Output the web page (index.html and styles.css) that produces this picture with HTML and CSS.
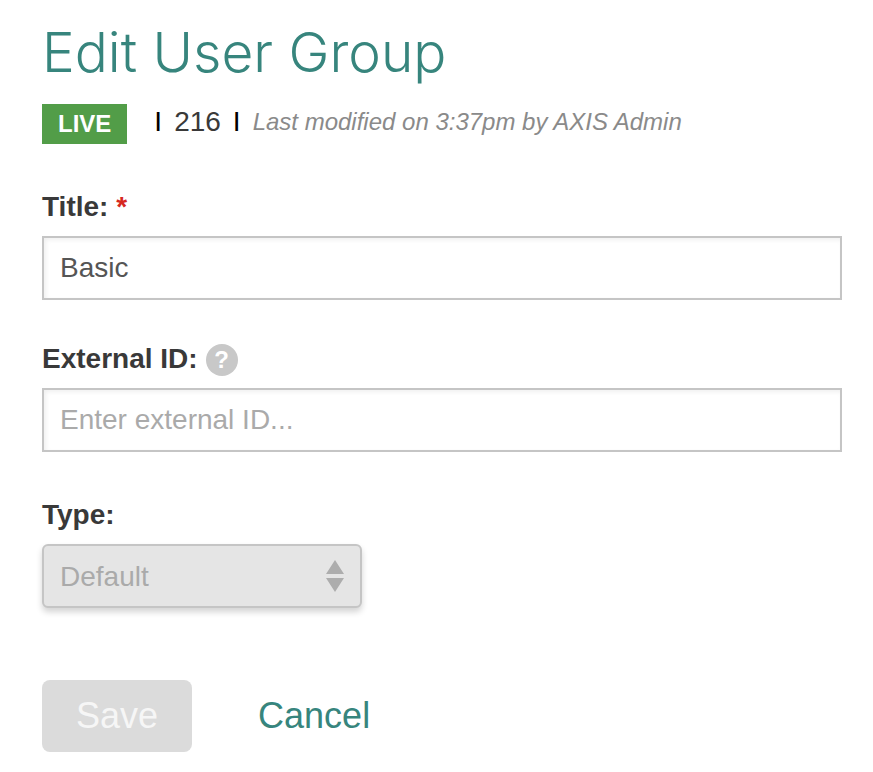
FILE: index.html
```html
<!DOCTYPE html>
<html lang="en">
<head>
<meta charset="utf-8">
<title>Edit User Group</title>
<link rel="stylesheet" href="styles.css">
</head>
<body>
<main class="page">
  <h1 class="title">Edit User Group</h1>
  <div class="meta">
    <span class="badge">LIVE</span>
    <span class="divider">I</span>
    <span class="id">216</span>
    <span class="divider">I</span>
    <em class="modified">Last modified on 3:37pm by AXIS Admin</em>
  </div>
  <form class="form">
    <div class="field">
      <div class="label-row">
        <label for="title">Title: <span class="required">*</span></label>
      </div>
      <input class="control" id="title" type="text" value="Basic">
    </div>
    <div class="field">
      <div class="label-row">
        <label for="external">External ID:</label>
        <button class="help" type="button">?</button>
      </div>
      <input class="control" id="external" type="text" placeholder="Enter external ID...">
    </div>
    <div class="field field-type">
      <div class="label-row">
        <label for="type">Type:</label>
      </div>
      <div class="select-wrap">
        <select class="control select" id="type" disabled><option>Default</option></select>
        <svg class="arrows" viewBox="0 0 18 32" width="18" height="32" aria-hidden="true"><path d="M9 0L18 14H0zM0 18H18L9 32z" fill="#adadad"/></svg>
      </div>
    </div>
    <div class="actions">
      <button class="save" type="submit" disabled>Save</button>
      <a class="cancel" href="#">Cancel</a>
    </div>
  </form>
</main>
</body>
</html>
```
FILE: styles.css
```css
* { box-sizing: border-box; }

body {
  margin: 0;
  background: #fff;
  color: #393939;
  font-family: "Liberation Sans", Arial, sans-serif;
  font-size: 28px;
  line-height: 32px;
}

.page { padding: 20px 31px 20px 42px; }

.title {
  margin: 0;
  color: #37857d;
  font-family: Inter, sans-serif;
  font-size: 55px;
  font-weight: 300;
  line-height: 64px;
}

.meta {
  display: flex;
  align-items: center;
  margin-top: 20px;
}

.badge {
  padding: 0 16px;
  background: #529d48;
  color: #fff;
  font-size: 24px;
  font-weight: bold;
  line-height: 40px;
  margin-right: 27px;
}

.divider { color: #000; padding-bottom: 4px; }

.id { margin: 0 12px; padding-bottom: 4px; }

.modified {
  margin-left: 12px;
  padding-bottom: 4px;
  color: #8a8a8a;
  font-size: 24px;
}

.field { margin-bottom: 44px; }

.field-type { padding-top: 4px; }

.form { padding-top: 48px; }

.label-row {
  display: flex;
  align-items: center;
  gap: 8px;
  height: 32px;
  margin-bottom: 12px;
  font-weight: bold;
}

.label-row label { padding-bottom: 2px; }

.required { color: #d6281f; }

.help {
  width: 32px;
  height: 32px;
  padding: 0;
  border: 0;
  border-radius: 50%;
  background: #c8c8c8;
  color: #fff;
  font: bold 24px "Liberation Sans", Arial, sans-serif;
}

.control {
  display: block;
  width: 100%;
  height: 64px;
  padding: 0 16px;
  border: 2px solid #c5c5c5;
  border-radius: 0;
  background: #fff;
  box-shadow: inset 2px 2px 4px #f0f0f0;
  color: #555;
  font: 28px "Liberation Sans", Arial, sans-serif;
}

.control::placeholder { color: #aaa; opacity: 1; }

.select-wrap { position: relative; max-width: 320px; }

.select {
  appearance: none;
  border-radius: 6px;
  background: #e5e5e5;
  box-shadow: 0 4px 6px #d4d4d4;
  color: #aaa;
  opacity: 1;
}

.arrows {
  position: absolute;
  top: 16px;
  right: 18px;
  pointer-events: none;
}

.actions {
  display: flex;
  align-items: center;
  gap: 66px;
  padding-top: 28px;
}

.save {
  height: 72px;
  padding: 0 34px;
  border: 0;
  border-radius: 8px;
  background: #dbdbdb;
  color: #f6f6f6;
  font: 36px "Liberation Sans", Arial, sans-serif;
}

.cancel { color: #37857d; font-size: 36px; text-decoration: none; }
```
